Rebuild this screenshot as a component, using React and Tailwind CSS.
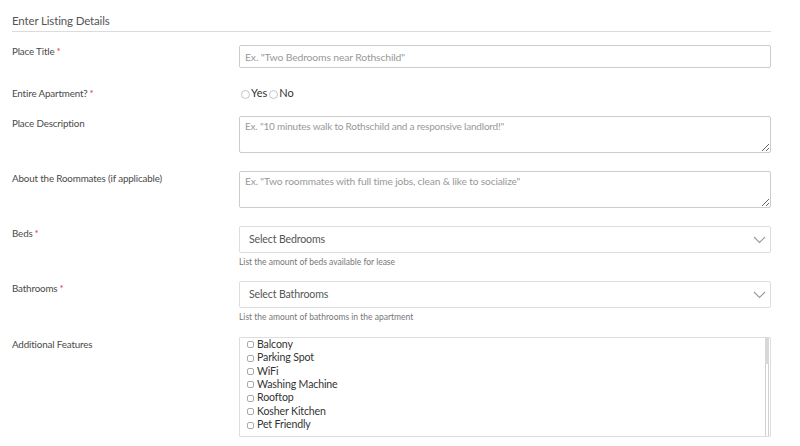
import React from "react";

const Star = () => <span className="text-[#e0393e] ml-[2px]">*</span>;

function Label({ children, req, className = "" }) {
  return (
    <div className={"w-[227px] shrink-0 text-[9.8px] tracking-[-0.15px] leading-[12px] text-[#4a4a4a] " + className}>
      {children}
      {req && <Star />}
    </div>
  );
}

function Chevron() {
  return (
    <svg width="13" height="8" viewBox="0 0 13 8" className="shrink-0">
      <path d="M1 1 L6.5 6.5 L12 1" fill="none" stroke="#999" strokeWidth="1.1" />
    </svg>
  );
}

function Select({ text }) {
  return (
    <div className="h-[27px] border border-[#ddd] rounded-[2px] flex items-center justify-between pl-[9px] pr-[4px] bg-white">
      <span className="text-[10.6px] tracking-[-0.15px] text-[#555]">{text}</span>
      <Chevron />
    </div>
  );
}

const features = [
  "Balcony",
  "Parking Spot",
  "WiFi",
  "Washing Machine",
  "Rooftop",
  "Kosher Kitchen",
  "Pet Friendly",
];

export default function App() {
  return (
    <div className="w-[800px] h-[446px] overflow-hidden bg-white pl-[12px] pr-[29px]" style={{ fontFamily: "Lato, 'Open Sans', sans-serif" }}>
      <div className="pt-[13px] pb-[3px] border-b border-[#dcdcdc] text-[11.5px] tracking-[-0.15px] leading-[15px] text-[#555]">
        Enter Listing Details
      </div>

      {/* Place Title */}
      <div className="flex mt-[13px]">
        <Label req>Place Title</Label>
        <input
          className="flex-1 h-[23px] border border-[#ccc] rounded-[2px] px-[5px] text-[10.4px] tracking-[-0.15px] text-[#555] placeholder:text-[#999] outline-none"
          placeholder={'Ex. "Two Bedrooms near Rothschild"'}
        />
      </div>

      {/* Entire Apartment */}
      <div className="flex mt-[19px] items-center">
        <Label req>Entire Apartment?</Label>
        <div className="flex items-center text-[11px] text-[#333] leading-[12px] pl-[2px]">
          <span className="w-[9px] h-[9px] rounded-full border border-[#c4c4c4] mr-[1px] mt-[2px]" />
          <span>Yes</span>
          <span className="w-[9px] h-[9px] rounded-full border border-[#c4c4c4] ml-[2px] mr-[1px] mt-[2px]" />
          <span>No</span>
        </div>
      </div>

      {/* Place Description */}
      <div className="flex mt-[17px]">
        <Label className="pt-[1px]">Place Description</Label>
        <textarea
          className="flex-1 h-[37px] border border-[#ccc] rounded-[2px] px-[5px] py-[3px] text-[10px] tracking-[-0.2px] leading-[13px] text-[#555] placeholder:text-[#999] outline-none resize-y"
          placeholder={'Ex. "10 minutes walk to Rothschild and a responsive landlord!"'}
        />
      </div>

      {/* Roommates */}
      <div className="flex mt-[18px]">
        <Label className="pt-[1px]">About the Roommates (if applicable)</Label>
        <textarea
          className="flex-1 h-[37px] border border-[#ccc] rounded-[2px] px-[5px] py-[3px] text-[10.2px] tracking-[-0.15px] leading-[13px] text-[#555] placeholder:text-[#999] outline-none resize-y"
          placeholder={'Ex. "Two roommates with full time jobs, clean & like to socialize"'}
        />
      </div>

      {/* Beds */}
      <div className="flex mt-[18px]">
        <Label req className="pt-[1px]">Beds</Label>
        <div className="flex-1">
          <Select text="Select Bedrooms" />
          <div className="text-[8.5px] leading-[9px] text-[#777] mt-[5px]">List the amount of beds available for lease</div>
        </div>
      </div>

      {/* Bathrooms */}
      <div className="flex mt-[14px]">
        <Label req className="pt-[1px]">Bathrooms</Label>
        <div className="flex-1">
          <Select text="Select Bathrooms" />
          <div className="text-[8.5px] leading-[9px] text-[#777] mt-[5px]">List the amount of bathrooms in the apartment</div>
        </div>
      </div>

      {/* Additional Features */}
      <div className="flex mt-[15px]">
        <Label className="pt-[1px]">Additional Features</Label>
        <div className="flex-1 h-[100px] border border-[#ddd] rounded-[1px] relative flex">
          <div className="flex-1 pt-[0px]">
            {features.map((f) => (
              <div key={f} className="flex items-center h-[13.4px] text-[10.6px] tracking-[-0.15px] text-[#333]">
                <span className="w-[7px] h-[7px] rounded-[2px] border border-[#aaa] ml-[7px] mr-[3px]" />
                <span>{f}</span>
              </div>
            ))}
          </div>
          <div className="w-[4px] mr-[1px] flex flex-col">
            <div className="h-[26px] bg-[#d8d8d8]" />
            <div className="flex-1 border-l border-r border-[#d0d0d0]" />
          </div>
        </div>
      </div>
    </div>
  );
}
